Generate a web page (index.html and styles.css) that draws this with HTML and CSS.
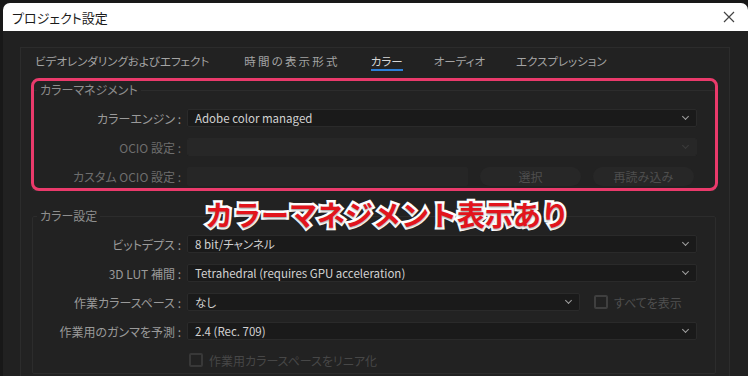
FILE: index.html
```html
<!DOCTYPE html>
<html lang="ja">
<head>
    <meta charset="UTF-8">
    <meta name="viewport" content="width=device-width, initial-scale=1.0">
    <title>プロジェクト設定</title>
    <link rel="stylesheet" href="styles.css">
</head>
<body>
    <div class="window">
        <div class="titlebar">
            <span class="title">プロジェクト設定</span>
            <svg class="close" width="12" height="12" viewBox="0 0 12 12">
                <path d="M1 1 L11 11 M11 1 L1 11" stroke="#444" stroke-width="1.2" fill="none"/>
            </svg>
        </div>

        <div class="content">
            <div class="panel">
                <nav class="tabs">
                    <span class="tab first">ビデオレンダリングおよびエフェクト</span>
                    <span class="tab wide">時間の表示形式</span>
                    <span class="tab active">カラー</span>
                    <span class="tab">オーディオ</span>
                    <span class="tab">エクスプレッション</span>
                </nav>

                <fieldset class="group marked">
                    <legend>カラーマネジメント</legend>
                    <div class="row">
                        <label>カラーエンジン :</label>
                        <div class="select"><span>Adobe color managed</span><i class="chev"></i></div>
                    </div>
                    <div class="row">
                        <label class="dim">OCIO 設定 :</label>
                        <div class="select off"><span></span><i class="chev"></i></div>
                    </div>
                    <div class="row">
                        <label class="dim">カスタム OCIO 設定 :</label>
                        <div class="custom">
                            <div class="field"></div>
                            <button class="pill">選択</button>
                            <button class="pill">再読み込み</button>
                        </div>
                    </div>
                </fieldset>

                <fieldset class="group">
                    <legend>カラー設定</legend>
                    <div class="row">
                        <label>ビットデプス :</label>
                        <div class="select"><span>8 bit/チャンネル</span><i class="chev"></i></div>
                    </div>
                    <div class="row">
                        <label>3D LUT 補間 :</label>
                        <div class="select"><span>Tetrahedral (requires GPU acceleration)</span><i class="chev"></i></div>
                    </div>
                    <div class="row">
                        <label>作業カラースペース :</label>
                        <div class="split">
                            <div class="select"><span>なし</span><i class="chev"></i></div>
                            <div class="check"><i class="box"></i><span>すべてを表示</span></div>
                        </div>
                    </div>
                    <div class="row">
                        <label>作業用のガンマを予測 :</label>
                        <div class="select"><span>2.4 (Rec. 709)</span><i class="chev"></i></div>
                    </div>
                    <div class="row">
                        <label></label>
                        <div class="check faded"><i class="box"></i><span>作業用カラースペースをリニア化</span></div>
                    </div>
                </fieldset>
            </div>

            <div class="callout">カラーマネジメント表示あり</div>
        </div>
    </div>
</body>
</html>
```

FILE: styles.css
```css
* {
    box-sizing: border-box;
}

body {
    margin: 0;
    background-color: #181818;
    font-family: "Noto Sans CJK JP", "Noto Sans", sans-serif;
    font-feature-settings: "palt";
    overflow: hidden;
}

.window {
    margin: 3px 0 0 3px;
    border-radius: 7px 7px 0 0;
    overflow: hidden;
    height: 373px;
    background-color: #212121;
    position: relative;
}

/* barra de titulo */
.titlebar {
    height: 28px;
    background-color: #ffffff;
    display: flex;
    align-items: center;
    justify-content: space-between;
    padding: 0 13px 0 9px;
}

.title {
    font-size: 13px;
    color: #1b1b1b;
}

.content {
    padding: 16px 18px 0 17px;
}

.panel {
    border: 1px solid #2c2c2c;
    border-bottom: none;
    background-color: #222222;
    height: 330px;
}

.tabs {
    display: flex;
    gap: 31px;
    padding-left: 14px;
}

.tab {
    font-size: 11.5px;
    line-height: 16px;
    padding-top: 5px;
    color: #a4a4a4;
    border-bottom: 2px solid transparent;
}

.tab.first {
    margin-right: 4px;
}

.tab.wide {
    letter-spacing: 2.2px;
}

.tab.active {
    color: #d6d6d6;
    border-bottom-color: #2d7fd8;
}

/* grupos */
.group {
    margin: 11px 13px 0 11px;
    padding: 11px 18px 4px 0;
    border: 1px solid #2c2c2c;
    border-radius: 2px;
    display: flex;
    flex-direction: column;
    gap: 11px;
}

.group + .group {
    margin-top: 17px;
    padding-top: 11px;
}

.group legend {
    margin-left: 4px;
    padding: 0 3px;
    font-size: 12px;
    line-height: 16px;
    color: #8e8e8e;
}

.group.marked {
    position: relative;
}

.group.marked::after {
    content: "";
    position: absolute;
    left: -2px;
    right: -3px;
    top: -20px;
    bottom: -1px;
    border: 3px solid #ea3a6b;
    border-radius: 8px;
}

.row {
    display: grid;
    grid-template-columns: 148px 1fr;
    column-gap: 6px;
    align-items: center;
    min-height: 18px;
}

.row label {
    text-align: right;
    font-size: 12px;
    color: #9a9a9a;
    white-space: nowrap;
}

.row label.dim {
    color: #6e6e6e;
}

.select {
    height: 18px;
    background-color: #1a1a1a;
    border: 1px solid #2a2a2a;
    border-radius: 2px;
    display: flex;
    align-items: center;
    justify-content: space-between;
    padding: 0 8px 0 7px;
    font-size: 11.5px;
    color: #d2d2d2;
}

.select.off {
    background-color: #272727;
    border-color: #272727;
}

.select.off .chev {
    border-color: #3c3c3c;
}

.chev {
    width: 5px;
    height: 5px;
    border-right: 1px solid #a0a0a0;
    border-bottom: 1px solid #a0a0a0;
    transform: rotate(45deg);
    margin-top: -4px;
}

.custom {
    display: flex;
    gap: 12px;
    padding-right: 3px;
}

.field {
    width: 281px;
    height: 19px;
    background-color: #262626;
    border-radius: 2px;
}

.pill {
    flex: 1;
    height: 19px;
    border: none;
    border-radius: 10px;
    background-color: #272727;
    color: #4e4e4e;
    font-family: inherit;
    font-size: 12px;
    padding: 0;
}

.split {
    display: flex;
    align-items: center;
    gap: 14px;
}

.split .select {
    width: 393px;
}

.check {
    display: flex;
    align-items: center;
    gap: 6px;
    font-size: 12px;
    color: #4f4f4f;
}

.box {
    width: 14px;
    height: 14px;
    border: 2px solid #3f3f3f;
    border-radius: 2px;
}

.check.faded {
    padding-left: 2px;
    color: #474747;
}

.check.faded .box {
    border-color: #383838;
}

/* anotacao sobre a imagem */
.callout {
    position: absolute;
    left: 202px;
    top: 194px;
    font-size: 28px;
    font-weight: 700;
    line-height: 34px;
    color: #e2141c;
    -webkit-text-stroke: 5px #ffffff;
    paint-order: stroke fill;
    text-shadow: 0 1px 2px rgba(0, 0, 0, 0.4);
    font-feature-settings: normal;
}
```
